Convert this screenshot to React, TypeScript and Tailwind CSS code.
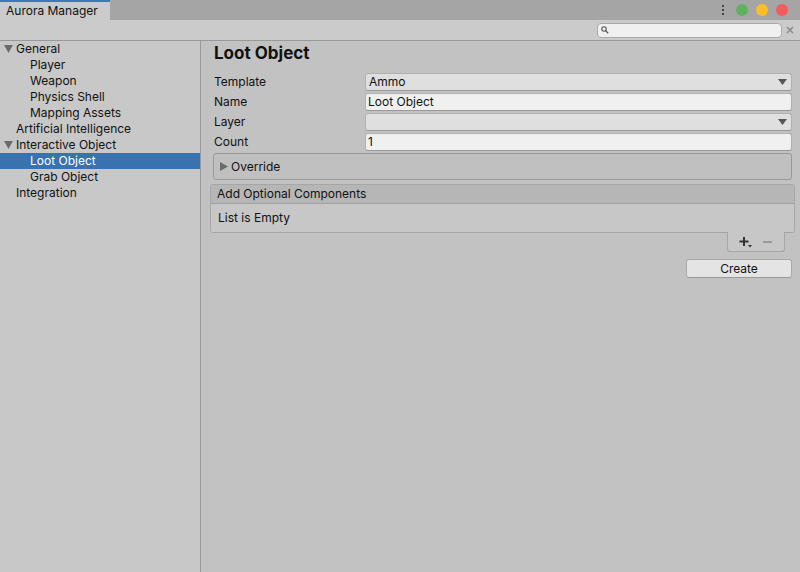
import React from 'react';

const font = { fontFamily: 'Inter, "Noto Sans", sans-serif' };

const tree = [
  { label: 'General', depth: 0, open: true },
  { label: 'Player', depth: 1 },
  { label: 'Weapon', depth: 1 },
  { label: 'Physics Shell', depth: 1 },
  { label: 'Mapping Assets', depth: 1 },
  { label: 'Artificial Intelligence', depth: 0 },
  { label: 'Interactive Object', depth: 0, open: true },
  { label: 'Loot Object', depth: 1, selected: true },
  { label: 'Grab Object', depth: 1 },
  { label: 'Integration', depth: 0 },
];

const DownArrow = () => (
  <svg width="9" height="6" viewBox="0 0 9 6" className="shrink-0">
    <path d="M0 0 L9 0 L4.5 6 Z" fill="#555" />
  </svg>
);

const Row: React.FC<{ label: string; children: React.ReactNode }> = ({ label, children }) => (
  <div className="flex items-center h-[20px]">
    <div className="w-[152px] shrink-0 text-[12px] text-[#111]">{label}</div>
    {children}
  </div>
);

const Dropdown: React.FC<{ value?: string }> = ({ value }) => (
  <div className="flex-1 -ml-[1px] h-[18px] flex items-center justify-between px-[3px] pr-[4px] bg-[#dfdfdf] border border-[#b0b0b0] border-b-[#999] rounded-[3px] text-[12px] text-[#111]">
    <span>{value}</span>
    <DownArrow />
  </div>
);

const TextField: React.FC<{ value: string }> = ({ value }) => (
  <div className="flex-1 -ml-[1px] h-[18px] flex items-center px-[2px] bg-[#f0f0f0] border border-[#b0b0b0] border-b-[#999] rounded-[3px] text-[12px] text-[#111]">
    {value}
  </div>
);

export default function App() {
  return (
    <div style={font} className="w-[800px] h-[572px] flex flex-col bg-[#c2c2c2] overflow-hidden">
      {/* tab bar */}
      <div className="h-[20px] flex items-stretch bg-[#a5a5a5]">
        <div className="w-[110px] bg-[#cbcbcb] border-t-2 border-[#3a79bb] flex items-center pl-[6px] text-[12px] text-[#111]">
          Aurora Manager
        </div>
        <div className="flex-1" />
        <div className="flex items-center gap-[8px] pr-[12px]">
          <div className="flex flex-col gap-[2px] mr-[4px]">
            <span className="w-[2px] h-[2px] bg-[#444]" />
            <span className="w-[2px] h-[2px] bg-[#444]" />
            <span className="w-[2px] h-[2px] bg-[#444]" />
          </div>
          <span className="w-[12px] h-[12px] rounded-full bg-[#5fb262]" />
          <span className="w-[12px] h-[12px] rounded-full bg-[#fbbd2a]" />
          <span className="w-[12px] h-[12px] rounded-full bg-[#f55b5b]" />
        </div>
      </div>
      {/* toolbar */}
      <div className="h-[21px] bg-[#cbcbcb] border-b border-[#999] flex items-center justify-end pr-[6px]">
        <div className="w-[185px] h-[15px] bg-[#f0f0f0] border border-[#aaa] rounded-[4px] flex items-center pl-[3px]">
          <svg width="8" height="8" viewBox="0 0 8 8">
            <circle cx="3" cy="3" r="2.2" stroke="#555" strokeWidth="1.1" fill="none" />
            <path d="M4.6 4.6 L7.2 7.2" stroke="#555" strokeWidth="1.3" />
          </svg>
        </div>
        <svg width="8" height="8" viewBox="0 0 8 8" className="ml-[4px]">
          <path d="M1 1 L7 7 M7 1 L1 7" stroke="#888" strokeWidth="1.4" />
        </svg>
      </div>
      <div className="flex-1 flex">
        {/* tree */}
        <div className="w-[201px] bg-[#c8c8c8] border-r border-[#999]">
          {tree.map((t) => (
            <div
              key={t.label}
              className={`h-[16px] flex items-center text-[12px] ${
                t.selected ? 'bg-[#3a72b0] text-white' : 'text-[#111]'
              }`}
              style={{ paddingLeft: t.depth === 0 ? 4 : 30 }}
            >
              {t.depth === 0 && (
                <span className="w-[12px] flex items-center">
                  {t.open && (
                    <svg width="9" height="8" viewBox="0 0 9 8">
                      <path d="M0 0 L9 0 L4.5 8 Z" fill="#6b6b6b" />
                    </svg>
                  )}
                </span>
              )}
              <span>{t.label}</span>
            </div>
          ))}
        </div>
        {/* inspector */}
        <div className="flex-1 flex flex-col pl-[13px] pr-[8px]">
          <div className="text-[17px] leading-[24px] font-bold text-[#111] h-[31px]">Loot Object</div>
          <Row label="Template">
            <Dropdown value="Ammo" />
          </Row>
          <Row label="Name">
            <TextField value="Loot Object" />
          </Row>
          <Row label="Layer">
            <Dropdown />
          </Row>
          <Row label="Count">
            <TextField value="1" />
          </Row>
          <div className="mt-[1px] -ml-[1px] h-[27px] border border-[#999] rounded-[3px] bg-[#c0c0c0] flex items-center pl-[6px] gap-[3px] text-[12px] text-[#111]">
            <svg width="8" height="9" viewBox="0 0 8 9">
              <path d="M0 0 L8 4.5 L0 9 Z" fill="#6b6b6b" />
            </svg>
            Override
          </div>
          <div className="-ml-[4px] -mr-[3px] mt-[4px] border border-[#a6a6a6] rounded-[3px] overflow-hidden">
            <div className="h-[19px] bg-[#b6b6b6] border-b border-[#a0a0a0] flex items-center pl-[6px] text-[12px] text-[#111]">
              Add Optional Components
            </div>
            <div className="h-[28px] bg-[#c7c7c7] flex items-center pl-[7px] text-[12px] text-[#111]">
              List is Empty
            </div>
          </div>
          <div className="flex justify-end mr-[7px]">
            <div className="w-[58px] h-[20px] -mt-[1px] bg-[#c7c7c7] border border-t-0 border-[#a6a6a6] rounded-b-[3px] flex items-center justify-between pl-[11px] pr-[12px]">
              <svg width="13" height="12" viewBox="0 0 13 12">
                <path d="M5 1 V10 M0.5 5.5 H9.5" stroke="#333" strokeWidth="2" />
                <path d="M9 9 L13 9 L11 11.5 Z" fill="#333" />
              </svg>
              <svg width="9" height="2" viewBox="0 0 9 2">
                <path d="M0 1 H9" stroke="#8a8a8a" strokeWidth="1.5" />
              </svg>
            </div>
          </div>
          <div className="flex justify-end mt-[7px]">
            <div className="w-[106px] h-[19px] bg-[#e4e4e4] border border-[#aaa] border-b-[#999] rounded-[3px] flex items-center justify-center text-[12px] text-[#111]">
              Create
            </div>
          </div>
        </div>
      </div>
    </div>
  );
}
